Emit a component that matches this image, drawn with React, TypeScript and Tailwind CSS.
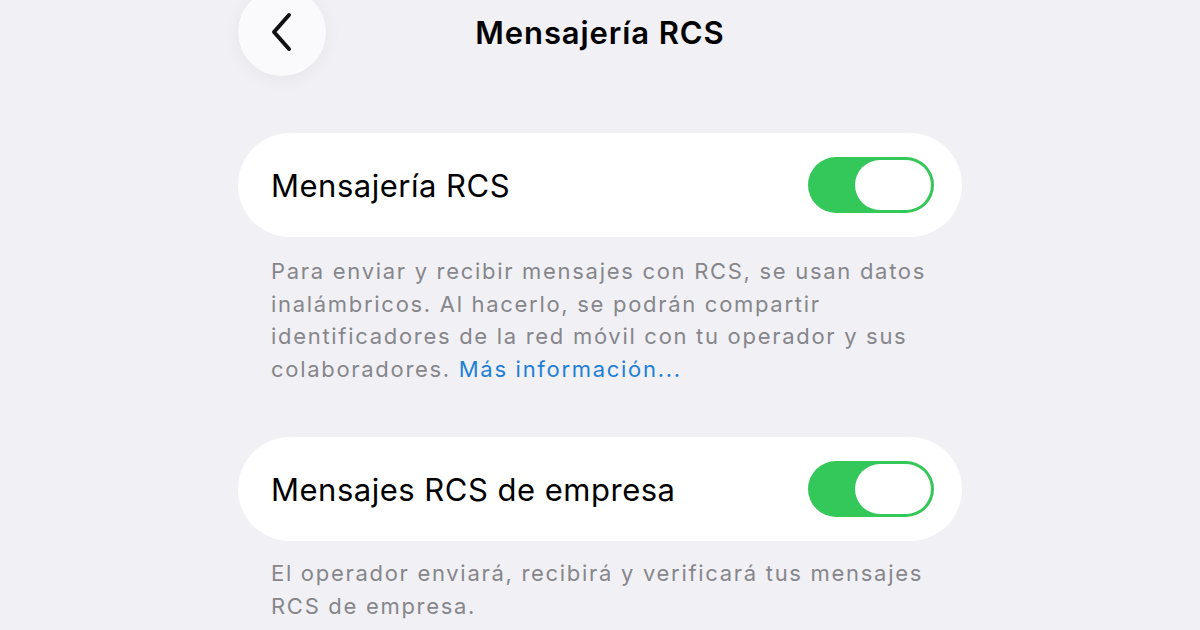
import React from "react";

function Toggle() {
  return (
    <div className="flex h-[56px] w-[126px] items-center justify-end rounded-full bg-[#34c759] p-[3px]">
      <div className="h-[50px] w-[76px] rounded-full bg-white" />
    </div>
  );
}

function Row({ label }: { label: string }) {
  return (
    <div className="flex h-[104px] items-center justify-between rounded-full bg-white pl-[33px] pr-[28px]">
      <span className="text-[31px] leading-none tracking-[0.5px] text-black">{label}</span>
      <Toggle />
    </div>
  );
}

export default function App() {
  return (
    <div
      className="h-[630px] w-[1200px] overflow-hidden bg-[#f1f1f5]"
      style={{ fontFamily: "Inter, 'Noto Sans', sans-serif" }}
    >
      <div className="mx-auto flex w-[724px] flex-col">
        <div className="-mt-3 grid h-[88px] grid-cols-[88px_1fr_88px] items-center">
          <button className="flex h-[88px] w-[88px] items-center justify-center rounded-full bg-[#fafafc] shadow-[0_3px_18px_rgba(0,0,0,0.05)]">
            <svg width="26" height="40" viewBox="0 0 26 40" fill="none">
              <path
                d="M20 3 L5 20 L20 37"
                stroke="#111"
                strokeWidth="4"
                strokeLinecap="round"
                strokeLinejoin="round"
              />
            </svg>
          </button>
          <h1 className="text-center text-[31px] font-semibold leading-none tracking-[0.9px] text-black">
            Mensajería RCS
          </h1>
          <div />
        </div>

        <div className="mt-[57px]">
          <Row label="Mensajería RCS" />
        </div>
        <p className="mt-[18px] px-[33px] text-[22px] leading-[32.5px] tracking-[1.7px] text-[#86868b]">
          Para enviar y recibir mensajes con RCS, se usan datos inalámbricos. Al hacerlo, se podrán
          compartir identificadores de la red móvil con tu operador y sus colaboradores.{" "}
          <span className="text-[#1e7fd4]">Más información...</span>
        </p>

        <div className="mt-[52px]">
          <Row label="Mensajes RCS de empresa" />
        </div>
        <p className="mt-[16px] px-[33px] text-[22px] leading-[32.5px] tracking-[1.7px] text-[#86868b]">
          El operador enviará, recibirá y verificará tus mensajes RCS de empresa.
        </p>
      </div>
    </div>
  );
}
